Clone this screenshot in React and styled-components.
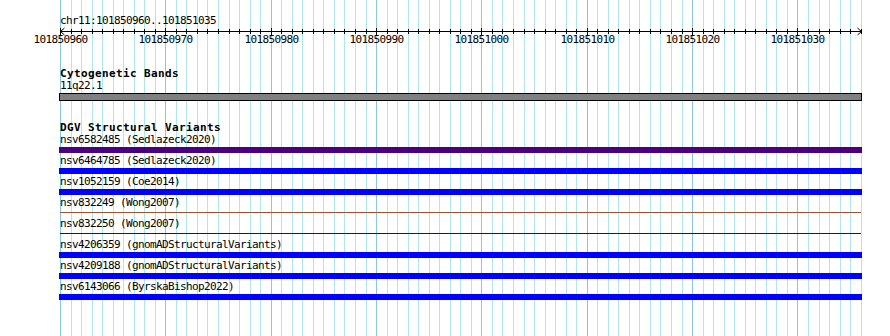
import React from 'react';
import styled, { createGlobalStyle } from 'styled-components';

const START = 101850960;
const END = 101851035;
const LEFT = 60;
const BP = 10.535;
const LINES = END - START + 2;

const xAt = (i) => Math.round(LEFT + i * BP) + 0.5;

const features = [
  { name: 'nsv6582485', source: 'Sedlazeck2020', color: '#4b0082', kind: 'bar' },
  { name: 'nsv6464785', source: 'Sedlazeck2020', color: '#0000ff', kind: 'bar' },
  { name: 'nsv1052159', source: 'Coe2014', color: '#0000ff', kind: 'bar' },
  { name: 'nsv832249', source: 'Wong2007', color: '#a0522d', kind: 'line' },
  { name: 'nsv832250', source: 'Wong2007', color: '#0000ff', kind: 'line' },
  { name: 'nsv4206359', source: 'gnomADStructuralVariants', color: '#0000ff', kind: 'bar' },
  { name: 'nsv4209188', source: 'gnomADStructuralVariants', color: '#0000ff', kind: 'bar' },
  { name: 'nsv6143066', source: 'ByrskaBishop2022', color: '#0000ff', kind: 'bar' },
];

const GlobalStyle = createGlobalStyle`
  body {
    margin: 0;
    background: #ffffff;
  }
`;

const Canvas = styled.div`
  position: relative;
  width: 890px;
  height: 336px;
  overflow: hidden;
  background: #ffffff;
`;

const GridLayer = styled.svg`
  position: absolute;
  left: 0;
  top: 0;
  z-index: 0;
`;

const Content = styled.div`
  position: relative;
  z-index: 1;
  padding-top: 15px;
`;

const Label = styled.div`
  padding-left: ${LEFT}px;
  font-family: 'DejaVu Sans Mono', 'Liberation Mono', monospace;
  font-size: 11px;
  letter-spacing: -0.62px;
  line-height: 12px;
  height: 12px;
  color: #000;
  white-space: pre;
`;

const TrackTitle = styled(Label)`
  font-weight: bold;
  letter-spacing: 0.38px;
`;

const Track = styled.section`
  margin-top: 21px;
`;

const Ruler = styled.svg`
  display: block;
`;

const TickLabel = styled.text`
  font-family: 'DejaVu Sans Mono', 'Liberation Mono', monospace;
  font-size: 11px;
  letter-spacing: -0.62px;
  fill: #000;
`;

const Band = styled.div`
  box-sizing: border-box;
  margin: 1px 0 0 59px;
  width: 803px;
  height: 8px;
  background: #808080;
  border: 1px solid #000;
`;

const Glyph = styled.div`
  display: flow-root;
  height: 9px;
`;

const Bar = styled.div`
  margin: ${(p) => (p.$thin ? '3px 0 0 60px' : '1px 0 0 59px')};
  width: ${(p) => (p.$thin ? '801px' : '803px')};
  height: ${(p) => (p.$thin ? '1px' : '6px')};
  background: ${(p) => p.$color};
`;

const Grid = () => (
  <GridLayer width="890" height="336">
    {Array.from({ length: LINES }, (_, i) => (
      <line
        key={i}
        x1={xAt(i)}
        x2={xAt(i)}
        y1="0"
        y2="336"
        stroke={i % 10 === 0 ? '#86c6e6' : '#aee8ee'}
        strokeWidth="1"
      />
    ))}
  </GridLayer>
);

const Scale = () => {
  const right = xAt(LINES - 1);
  return (
    <Ruler width="890" height="20">
      <line x1={LEFT} x2={right} y1="4.5" y2="4.5" stroke="#000" />
      {Array.from({ length: LINES }, (_, i) => (
        <line
          key={i}
          x1={xAt(i)}
          x2={xAt(i)}
          y1={i % 10 === 0 ? 1 : 2}
          y2={i % 10 === 0 ? 8 : 7}
          stroke="#000"
        />
      ))}
      <path d={`M${LEFT + 4.5} 1 L${LEFT + 0.5} 4.5 L${LEFT + 4.5} 8`} fill="none" stroke="#000" />
      <path d={`M${right - 4} 1 L${right} 4.5 L${right - 4} 8`} fill="none" stroke="#000" />
      {Array.from({ length: 8 }, (_, k) => (
        <TickLabel key={k} x={xAt(k * 10)} y="16" textAnchor="middle">
          {START + k * 10}
        </TickLabel>
      ))}
    </Ruler>
  );
};

const FeatureRow = ({ name, source, color, kind }) => (
  <div>
    <Label>{`${name} (${source})`}</Label>
    <Glyph>
      <Bar $color={color} $thin={kind === 'line'} />
    </Glyph>
  </div>
);

const App = () => (
  <>
    <GlobalStyle />
    <Canvas>
      <Grid />
      <Content>
        <Label>{`chr11:${START}..${END}`}</Label>
        <Scale />
        <Track>
          <TrackTitle>Cytogenetic Bands</TrackTitle>
          <Label>11q22.1</Label>
          <Band />
        </Track>
        <Track>
          <TrackTitle>DGV Structural Variants</TrackTitle>
          {features.map((f) => (
            <FeatureRow key={f.name} {...f} />
          ))}
        </Track>
      </Content>
    </Canvas>
  </>
);

export default App;
